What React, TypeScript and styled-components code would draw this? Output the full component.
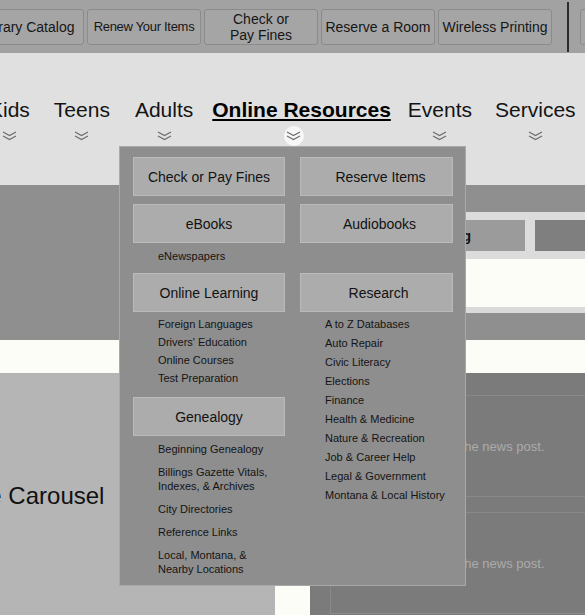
import React from "react";
import styled, { createGlobalStyle } from "styled-components";

const GlobalStyle = createGlobalStyle`
	html, body {
		margin: 0;
		padding: 0;
		overflow: hidden;
		background: #e0e0e0;
	}
	body {
		font-family: "Liberation Sans", Arial, sans-serif;
	}
`;

const quickLinks = [
	{ label: "Library Catalog" },
	{ label: "Renew Your Items", tight: true },
	{ label: "Check or\nPay Fines" },
	{ label: "Reserve a Room" },
	{ label: "Wireless Printing" },
];

// space before each menu entry
const navItems = [
	{ label: "Kids", space: 0 },
	{ label: "Teens", space: 24 },
	{ label: "Adults", space: 25 },
	{ label: "Online Resources", space: 19, active: true },
	{ label: "Events", space: 17 },
	{ label: "Services", space: 23 },
];

const Chevrons = () => (
	<svg width="15" height="10" viewBox="0 0 15 10" fill="none">
		<path d="M1 1 L7.5 4.6 L14 1 M1 5 L7.5 8.6 L14 5" stroke="#6c6c6c" strokeWidth="1.1" />
	</svg>
);

export default function App() {
	return (
		<>
			<GlobalStyle />
			<Page>
				<QuickBar>
					{quickLinks.map((q) => (
						<QuickButton key={q.label} $tight={q.tight}>
							{q.label}
						</QuickButton>
					))}
					<Divider />
					<QuickButton>Ask a Librarian</QuickButton>
				</QuickBar>

				<NavBar>
					{navItems.map((n) => (
						<NavItem key={n.label} $space={n.space}>
							<NavLabel $active={n.active}>{n.label}</NavLabel>
							<ChevronWrap $active={n.active}>
								<Chevrons />
							</ChevronWrap>
						</NavItem>
					))}

					<Dropdown>
						<Tile>Check or Pay Fines</Tile>
						<Tile $offset={8}>Reserve Items</Tile>

						<Group>
							<Tile>eBooks</Tile>
							<LinkList $top={3}>
								<LinkItem $pad={2.5}>eNewspapers</LinkItem>
							</LinkList>
						</Group>
						<Group>
							<Tile $offset={6}>Audiobooks</Tile>
						</Group>

						<Group>
							<Tile>Online Learning</Tile>
							<LinkList $top={3} $bottom={10}>
								<LinkItem $pad={2}>Foreign Languages</LinkItem>
								<LinkItem $pad={2}>Drivers' Education</LinkItem>
								<LinkItem $pad={2}>Online Courses</LinkItem>
								<LinkItem $pad={2}>Test Preparation</LinkItem>
							</LinkList>
							<Tile>Genealogy</Tile>
							<LinkList $top={1}>
								<LinkItem $pad={4.5}>Beginning Genealogy</LinkItem>
								<LinkItem $pad={4.5}>
									Billings Gazette Vitals,
									<br />
									Indexes, &amp; Archives
								</LinkItem>
								<LinkItem $pad={4.5}>City Directories</LinkItem>
								<LinkItem $pad={4.5}>Reference Links</LinkItem>
								<LinkItem $pad={4.5}>
									Local, Montana, &amp;
									<br />
									Nearby Locations
								</LinkItem>
							</LinkList>
						</Group>
						<Group>
							<Tile $offset={4}>Research</Tile>
							<LinkList $top={2.5}>
								<LinkItem $pad={2.5}>A to Z Databases</LinkItem>
								<LinkItem $pad={2.5}>Auto Repair</LinkItem>
								<LinkItem $pad={2.5}>Civic Literacy</LinkItem>
								<LinkItem $pad={2.5}>Elections</LinkItem>
								<LinkItem $pad={2.5}>Finance</LinkItem>
								<LinkItem $pad={2.5}>Health &amp; Medicine</LinkItem>
								<LinkItem $pad={2.5}>Nature &amp; Recreation</LinkItem>
								<LinkItem $pad={2.5}>Job &amp; Career Help</LinkItem>
								<LinkItem $pad={2.5}>Legal &amp; Government</LinkItem>
								<LinkItem $pad={2.5}>Montana &amp; Local History</LinkItem>
							</LinkList>
						</Group>
					</Dropdown>
				</NavBar>

				<Hero>
					<SearchColumn>
						<SearchRow>
							<SearchField>Catalog</SearchField>
							<SearchButton />
						</SearchRow>
						<SearchNotice />
						<SearchRule />
					</SearchColumn>
				</Hero>

				<Strip />

				<Lower>
					<Carousel>
						<CarouselTitle>Image Carousel</CarouselTitle>
					</Carousel>
					<News>
						<NewsCard>Summary of the news post.</NewsCard>
						<NewsCard>Summary of the news post.</NewsCard>
					</News>
				</Lower>
			</Page>
		</>
	);
}

const Page = styled.div`
	position: relative;
	width: 720px;
	margin-left: -80px;
`;

const QuickBar = styled.div`
	display: flex;
	align-items: flex-start;
	gap: 3px;
	height: 53px;
	box-sizing: border-box;
	padding: 9px 0 0 50px;
	background: #a2a2a2;
`;

const QuickButton = styled.div<{ $tight?: boolean }>`
	flex: none;
	width: 114px;
	height: 36px;
	box-sizing: border-box;
	display: flex;
	align-items: center;
	justify-content: center;
	text-align: center;
	white-space: pre-line;

	background: #a5a5a5;
	border: 1px solid #8b8b8b;
	border-radius: 3px;

	font-size: ${(p) => (p.$tight ? 13 : 14)}px;
	letter-spacing: ${(p) => (p.$tight ? "-0.3px" : "normal")};
	line-height: 16px;
	color: #161616;
`;

const Divider = styled.div`
	flex: none;
	width: 2px;
	height: 50px;
	margin: -7px 8px 0 12px;
	background: #2c2c2c;
`;

const NavBar = styled.nav`
	position: relative;
	display: flex;
	align-items: flex-start;
	height: 132px;
	box-sizing: border-box;
	padding: 45px 0 0 69px;
	background: #e0e0e0;
`;

const NavItem = styled.div<{ $space: number }>`
	display: flex;
	flex-direction: column;
	align-items: center;
	flex: none;
	margin-left: ${(p) => p.$space}px;
`;

const NavLabel = styled.span<{ $active?: boolean }>`
	font-size: 21px;
	line-height: 24px;
	color: ${(p) => (p.$active ? "#000" : "#141414")};
	font-weight: ${(p) => (p.$active ? 700 : 400)};
	text-decoration: ${(p) => (p.$active ? "underline" : "none")};
	text-decoration-thickness: 2px;
	text-underline-offset: 2px;
`;

const ChevronWrap = styled.div<{ $active?: boolean }>`
	width: 20px;
	height: 20px;
	margin-top: 4px;
	display: flex;
	align-items: center;
	justify-content: center;
	border-radius: 50%;
	background: ${(p) => (p.$active ? "#f7f7f7" : "transparent")};
	transform: translateX(${(p) => (p.$active ? -8 : 0)}px);
`;

const Dropdown = styled.div`
	position: absolute;
	top: 93px;
	left: 199px;
	z-index: 5;
	width: 347px;
	box-sizing: border-box;

	display: grid;
	grid-template-columns: 152px 153px;
	column-gap: 15px;
	row-gap: 8px;
	align-items: start;

	padding: 10px 12px 5px 13px;
	background: #8e8e8e;
	border: 1px solid #a9a9a9;
`;

const Group = styled.div`
	display: flex;
	flex-direction: column;
`;

const Tile = styled.div<{ $offset?: number }>`
	height: 39px;
	box-sizing: border-box;
	display: flex;
	align-items: center;
	justify-content: center;
	padding-left: ${(p) => p.$offset ?? 0}px;

	background: #acacac;
	border: 1px solid #bababa;

	font-size: 14px;
	color: #121212;
`;

const LinkList = styled.ul<{ $top?: number; $bottom?: number }>`
	list-style: none;
	margin: 0;
	padding: ${(p) => p.$top ?? 0}px 0 ${(p) => p.$bottom ?? 0}px 25px;
`;

const LinkItem = styled.li<{ $pad: number }>`
	padding: ${(p) => p.$pad}px 0;
	font-size: 11px;
	line-height: 14px;
	color: #141414;
`;

const Hero = styled.section`
	display: flex;
	justify-content: flex-end;
	height: 155px;
	background: #8f8f8f;
`;

const SearchColumn = styled.div`
	width: 330px;
	padding-top: 27px;
	display: flex;
	flex-direction: column;
`;

const SearchRow = styled.div`
	display: flex;
	gap: 10px;
	height: 47px;
	box-sizing: border-box;
	padding: 8px 15px 8px 20px;
	background: #dcdcdc;
`;

const SearchField = styled.div`
	flex: 1;
	display: flex;
	align-items: center;
	justify-content: flex-end;
	padding-right: 54px;
	background: #9b9b9b;
	font-size: 14px;
	font-weight: 700;
	color: #111;
`;

const SearchButton = styled.div`
	width: 90px;
	background: #7f7f7f;
`;

const SearchNotice = styled.div`
	height: 48px;
	background: #fdfdf7;
`;

const SearchRule = styled.div`
	height: 6px;
	background: #dadada;
`;

const Strip = styled.div`
	height: 33px;
	background: #fdfdf7;
`;

const Lower = styled.section`
	display: flex;
	gap: 35px;
	height: 245px;
	background: #fdfdf7;
`;

const Carousel = styled.div`
	width: 355px;
	display: flex;
	align-items: center;
	padding-left: 15px;
	box-sizing: border-box;
	background: #b5b5b5;
`;

const CarouselTitle = styled.h2`
	margin: 0;
	font-size: 24px;
	line-height: 28px;
	font-weight: 400;
	color: #111;
`;

const News = styled.div`
	flex: 1;
	display: flex;
	flex-direction: column;
	gap: 15px;
	padding: 22px 20px 0;
	background: #7b7b7b;
`;

const NewsCard = styled.div`
	flex: none;
	height: 102px;
	box-sizing: border-box;
	display: flex;
	align-items: center;
	padding-left: 56px;
	border: 1px solid #8a8a8a;
	font-size: 13px;
	color: #ababab;
`;
